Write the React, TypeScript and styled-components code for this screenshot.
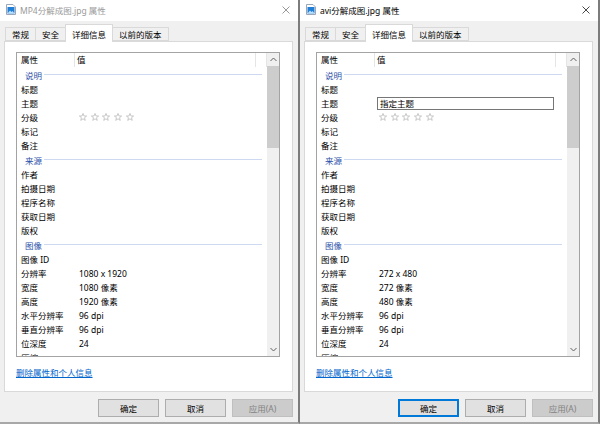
import React from 'react'
import styled, { createGlobalStyle } from 'styled-components'

const GlobalStyle = createGlobalStyle`
  html, body {
    margin: 0;
    padding: 0;
    background: #f0f0f0;
    font-family: "Noto Sans", "Noto Sans CJK SC", sans-serif;
    font-size: 8.5px;
    color: #000;
  }
`

const Screen = styled.div`
  display: flex;
  width: 600px;
  height: 424px;
  overflow: hidden;
`

const Window = styled.div`
  box-sizing: border-box;
  width: 300px;
  height: 424px;
  display: flex;
  flex-direction: column;
  background: #f0f0f0;
  border-right: 2px solid #7c7c7c;
  border-bottom: 2px solid #a8a8a8;
`

const TitleBar = styled.div`
  height: 21px;
  flex: none;
  display: flex;
  align-items: center;
  gap: 4px;
  padding: 0 8px 2px 6px;
  box-sizing: border-box;
  background: #ffffff;
`

const TitleText = styled.span<{ $active: boolean }>`
  flex: 1;
  color: ${p => (p.$active ? '#000' : '#9a9a9a')};
  white-space: nowrap;
`

const TabRow = styled.div`
  height: 20px;
  flex: none;
  display: flex;
  align-items: flex-end;
  padding-left: 6px;
  position: relative;
  z-index: 1;
`

const Tab = styled.div<{ $active?: boolean }>`
  box-sizing: border-box;
  height: ${p => (p.$active ? '18px' : '14px')};
  margin-bottom: ${p => (p.$active ? '-1px' : '0')};
  margin-left: -1px;
  padding: 0 6px;
  display: flex;
  align-items: center;
  border: 1px solid #d9d9d9;
  border-bottom: ${p => (p.$active ? 'none' : '1px solid #d9d9d9')};
  background: ${p => (p.$active ? '#ffffff' : '#f0f0f0')};
  white-space: nowrap;
`

const Panel = styled.div`
  box-sizing: border-box;
  margin-left: 4px;
  width: 289px;
  height: 351px;
  flex: none;
  background: #ffffff;
  border: 1px solid #d9d9d9;
  padding: 10px 0 0 11px;
`

const List = styled.div`
  box-sizing: border-box;
  width: 264px;
  height: 305px;
  border: 1px solid #a3a3a3;
  display: flex;
  overflow: hidden;
  background: #fff;
`

const ListBody = styled.div`
  flex: 1;
  overflow: hidden;
`

const HeaderRow = styled.div`
  height: 14px;
  display: flex;
  align-items: center;
`

const HeaderCell = styled.div<{ $w?: number }>`
  box-sizing: border-box;
  width: ${p => (p.$w ? `${p.$w}px` : 'auto')};
  flex: ${p => (p.$w ? 'none' : '1')};
  height: 14px;
  line-height: 13px;
  padding-left: ${p => (p.$w === 58 ? '4px' : '2px')};
  border-right: 1px solid #e5e5e5;
`

const GroupRow = styled.div`
  height: 15px;
  display: flex;
  align-items: center;
  padding: 0 5px 0 8px;
  color: #2b4fa8;
`

const GroupLine = styled.div`
  flex: 1;
  height: 1px;
  margin-left: 2px;
  background: #cdd9f1;
`

const Row = styled.div`
  height: 14px;
  display: flex;
  align-items: center;
  white-space: nowrap;
`

const Label = styled.div`
  width: 58px;
  padding-left: 4px;
  flex: none;
`

const Value = styled.div`
  flex: 1;
  display: flex;
  align-items: center;
`

const EditBox = styled.div`
  box-sizing: border-box;
  margin-left: -2px;
  width: 177px;
  height: 13px;
  border: 1px solid #767676;
  padding-left: 2px;
  line-height: 11px;
  background: #fff;
`

const Stars = styled.div`
  display: flex;
  gap: 3.7px;
`

const ScrollBar = styled.div`
  width: 12px;
  flex: none;
  display: flex;
  flex-direction: column;
  background: #f0f0f0;
`

const ScrollArrow = styled.div`
  height: 13px;
  flex: none;
  display: flex;
  align-items: center;
  justify-content: center;
`

const Thumb = styled.div`
  height: 82px;
  flex: none;
  background: #cdcdcd;
`

const Track = styled.div`
  flex: 1;
`

const Link = styled.a`
  display: inline-block;
  margin-top: 9px;
  color: #0066cc;
  text-decoration: underline;
`

const ButtonRow = styled.div`
  display: flex;
  justify-content: flex-end;
  gap: 6px;
  margin-top: 7px;
  padding-right: 5px;
`

const Button = styled.div<{ $focused?: boolean; $disabled?: boolean }>`
  box-sizing: border-box;
  width: 61px;
  height: 18px;
  display: flex;
  align-items: center;
  justify-content: center;
  background: ${p => (p.$disabled ? '#cccccc' : '#e1e1e1')};
  border: ${p => (p.$focused ? '2px solid #0078d7' : p.$disabled ? '1px solid #bfbfbf' : '1px solid #adadad')};
  color: ${p => (p.$disabled ? '#838383' : '#000')};
`

const FileIcon = () => (
  <svg width="10" height="11" viewBox="0 0 10 11">
    <path d="M0.5 0.5 H7 L9.5 3 V10.5 H0.5 Z" fill="#fff" stroke="#9aa7b8" />
    <rect x="1.5" y="3" width="7" height="6.5" fill="#1f7ed6" />
    <path d="M1.5 9.5 L4 6.5 L5.5 8 L6.5 7 L8.5 9.5 Z" fill="#bfe0ff" />
  </svg>
)

const CloseIcon = ({ color }: { color: string }) => (
  <svg width="8" height="8" viewBox="0 0 8 8">
    <path d="M0.5 0.5 L7.5 7.5 M7.5 0.5 L0.5 7.5" stroke={color} strokeWidth="0.9" />
  </svg>
)

const Star = () => (
  <svg width="8" height="8" viewBox="0 0 10 10">
    <path
      d="M5 0.6 L6.2 3.7 L9.5 3.8 L6.9 5.9 L7.8 9.2 L5 7.3 L2.2 9.2 L3.1 5.9 L0.5 3.8 L3.8 3.7 Z"
      fill="none"
      stroke="#b4b4b4"
      strokeWidth="0.9"
      strokeLinejoin="round"
    />
  </svg>
)

const Chevron = ({ up }: { up?: boolean }) => (
  <svg width="7" height="5" viewBox="0 0 7 5">
    <path d={up ? 'M0.5 4 L3.5 1 L6.5 4' : 'M0.5 1 L3.5 4 L6.5 1'} fill="none" stroke="#606060" strokeWidth="1" />
  </svg>
)

type Props = {
  title: string
  active: boolean
  width: number
  height: number
  editing?: boolean
}

const PropertiesWindow = ({ title, active, width, height, editing }: Props) => {
  const source = ['作者', '拍摄日期', '程序名称', '获取日期', '版权']
  const image: [string, string][] = [
    ['图像 ID', ''],
    ['分辨率', `${width} x ${height}`],
    ['宽度', `${width} 像素`],
    ['高度', `${height} 像素`],
    ['水平分辨率', '96 dpi'],
    ['垂直分辨率', '96 dpi'],
    ['位深度', '24'],
    ['压缩', ''],
  ]

  return (
    <Window>
      <TitleBar>
        <FileIcon />
        <TitleText $active={active}>{title}</TitleText>
        <CloseIcon color={active ? '#333' : '#8c8c8c'} />
      </TitleBar>
      <TabRow>
        <Tab>常规</Tab>
        <Tab>安全</Tab>
        <Tab $active>详细信息</Tab>
        <Tab>以前的版本</Tab>
      </TabRow>
      <Panel>
        <List>
          <ListBody>
            <HeaderRow>
              <HeaderCell $w={58}>属性</HeaderCell>
              <HeaderCell>值</HeaderCell>
              <HeaderCell $w={11} />
            </HeaderRow>
            <GroupRow>
              说明
              <GroupLine />
            </GroupRow>
            <Row>
              <Label>标题</Label>
            </Row>
            <Row>
              <Label>主题</Label>
              <Value>{editing && <EditBox>指定主题</EditBox>}</Value>
            </Row>
            <Row>
              <Label>分级</Label>
              <Value>
                <Stars>
                  <Star />
                  <Star />
                  <Star />
                  <Star />
                  <Star />
                </Stars>
              </Value>
            </Row>
            <Row>
              <Label>标记</Label>
            </Row>
            <Row>
              <Label>备注</Label>
            </Row>
            <GroupRow>
              来源
              <GroupLine />
            </GroupRow>
            {source.map(s => (
              <Row key={s}>
                <Label>{s}</Label>
              </Row>
            ))}
            <GroupRow>
              图像
              <GroupLine />
            </GroupRow>
            {image.map(([k, v]) => (
              <Row key={k}>
                <Label>{k}</Label>
                <Value>{v}</Value>
              </Row>
            ))}
          </ListBody>
          <ScrollBar>
            <ScrollArrow>
              <Chevron up />
            </ScrollArrow>
            <Thumb />
            <Track />
            <ScrollArrow>
              <Chevron />
            </ScrollArrow>
          </ScrollBar>
        </List>
        <Link>删除属性和个人信息</Link>
      </Panel>
      <ButtonRow>
        <Button $focused={active}>确定</Button>
        <Button>取消</Button>
        <Button $disabled>应用(A)</Button>
      </ButtonRow>
    </Window>
  )
}

const App: React.FC = () => {
  return (
    <>
      <GlobalStyle />
      <Screen>
        <PropertiesWindow title="MP4分解成图.jpg 属性" active={false} width={1080} height={1920} />
        <PropertiesWindow title="avi分解成图.jpg 属性" active width={272} height={480} editing />
      </Screen>
    </>
  )
}

export default App
